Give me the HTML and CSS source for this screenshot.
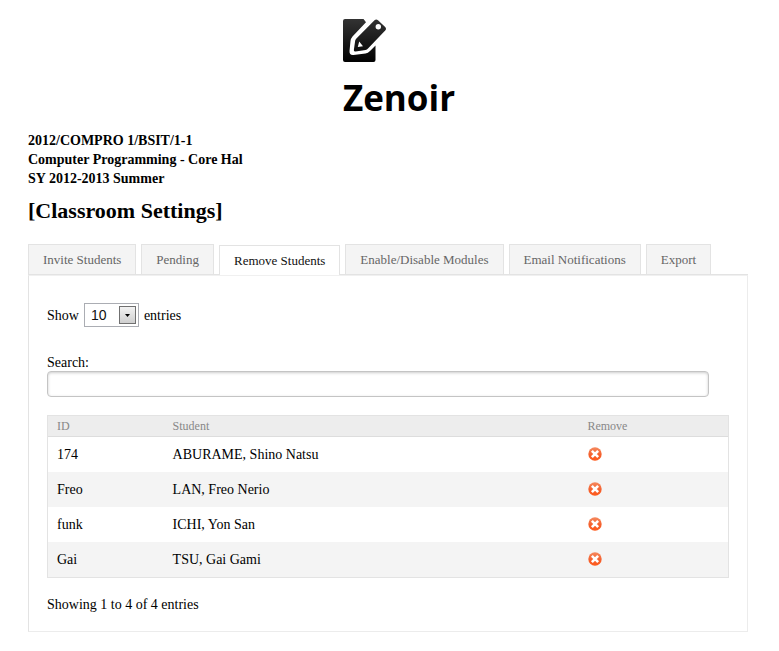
FILE: index.html
```html
<!DOCTYPE html>
<html lang="en">
<head>
<meta charset="utf-8">
<title>Zenoir</title>
<link rel="stylesheet" href="styles.css">
</head>
<body>
<svg class="defs" width="0" height="0" aria-hidden="true">
  <defs>
    <linearGradient id="orange" x1="0" y1="0" x2="0" y2="1">
      <stop offset="0" stop-color="#f58a60"/>
      <stop offset="0.55" stop-color="#f4602e"/>
      <stop offset="1" stop-color="#ff5a1c"/>
    </linearGradient>
    <symbol id="cross" viewBox="0 0 14 14">
      <circle cx="7" cy="7" r="6.7" fill="url(#orange)"/>
      <path d="M4.8 4.8 9.2 9.2M9.2 4.8 4.8 9.2" stroke="#fff" stroke-width="2.6" stroke-linecap="square"/>
    </symbol>
  </defs>
</svg>
<header class="brand">
  <div class="brand-inner">
    <svg class="logo" viewBox="0 0 44 44" aria-hidden="true">
      <defs>
        <linearGradient id="ink" gradientUnits="userSpaceOnUse" x1="0" y1="0" x2="0" y2="44">
          <stop offset="0" stop-color="#333"/>
          <stop offset="1" stop-color="#000"/>
        </linearGradient>
      </defs>
      <path fill="url(#ink)" d="M2 0H20.5L23 3.200 9.500 17.500Q7.800 19.500 7.500 22L6.500 32Q6.300 36.500 10.500 36L22.500 34.500Q25 34 27 32L32.500 26.500V41Q32.500 43 30.500 43H2Q0 43 0 41V2Q0 0 2 0Z"/>
      <path fill="url(#ink)" fill-rule="evenodd" d="M31.500 1.200Q33.200-.3 35 1.200L42.200 8Q43.800 9.800 42.200 11.600L25 29.500Q24 30.600 22.500 30.900L12.500 32.500Q10.700 32.600 10.900 30.800L12.200 21.500Q12.500 20.300 13.400 19.400ZM35.300 5A2.700 2.700 0 1 0 35.300 10.400A2.700 2.700 0 1 0 35.300 5ZM16.200 22.500 14.800 28.100 20 27.200Z"/>
    </svg>
    <h1>Zenoir</h1>
  </div>
</header>
<main class="page">
  <p class="course">2012/COMPRO 1/BSIT/1-1<br>Computer Programming - Core Hal<br>SY 2012-2013 Summer</p>
  <h2>[Classroom Settings]</h2>
  <nav class="tabs">
    <a href="#invite">Invite Students</a>
    <a href="#pending">Pending</a>
    <a class="active" href="#remove" aria-current="page">Remove Students</a>
    <a href="#modules">Enable/Disable Modules</a>
    <a href="#email">Email Notifications</a>
    <a href="#export">Export</a>
  </nav>
  <section class="panel" id="remove">
    <div class="length">
      <label for="length">Show</label>
      <span class="select-box">
        <select id="length"><option>10</option><option>25</option><option>50</option></select>
        <span class="arrow"><svg viewBox="0 0 5 3" aria-hidden="true"><path d="M0 0H5L2.500 3Z"/></svg></span>
      </span>
      <label for="length">entries</label>
    </div>
    <label class="search-label" for="search">Search:</label>
    <input class="search" id="search" type="text">
    <table>
      <thead><tr><th class="col-id">ID</th><th class="col-student">Student</th><th>Remove</th></tr></thead>
      <tbody>
        <tr><td>174</td><td>ABURAME, Shino Natsu</td><td><button type="button" aria-label="Remove"><svg><use href="#cross"/></svg></button></td></tr>
        <tr><td>Freo</td><td>LAN, Freo Nerio</td><td><button type="button" aria-label="Remove"><svg><use href="#cross"/></svg></button></td></tr>
        <tr><td>funk</td><td>ICHI, Yon San</td><td><button type="button" aria-label="Remove"><svg><use href="#cross"/></svg></button></td></tr>
        <tr><td>Gai</td><td>TSU, Gai Gami</td><td><button type="button" aria-label="Remove"><svg><use href="#cross"/></svg></button></td></tr>
      </tbody>
    </table>
    <p class="info">Showing 1 to 4 of 4 entries</p>
  </section>
</main>
</body>
</html>
```
FILE: styles.css
```css
* { box-sizing: border-box; }
body {
  margin: 0;
  padding: 19px 31px 19px 28px;
  background: #fff;
  color: #000;
  font: 14px/19px "Liberation Serif", "Times New Roman", serif;
}
h1, h2, p { margin: 0; }
.defs { position: absolute; }
.brand { display: flex; justify-content: center; padding-left: 22px; }
.logo { display: block; width: 44px; height: 44px; }
h1 {
  margin-top: 10px;
  font: bold 35px/50px "Comic Sans MS", "Open Sans", sans-serif;
}
.course { margin-top: 8px; font-weight: bold; }
h2 { margin-top: 10px; font-size: 22px; line-height: 26px; }
.tabs {
  display: flex;
  align-items: flex-end;
  gap: 5px;
  margin-top: 20px;
  border-bottom: 1px solid #e3e3e3;
}
.tabs a {
  height: 30px;
  padding: 0 14px;
  border: 1px solid #e3e3e3;
  border-bottom: 0;
  background: #f4f4f4;
  color: #666;
  font-size: 13px;
  line-height: 30px;
  text-decoration: none;
  white-space: nowrap;
}
.tabs .active {
  margin-bottom: -1px;
  background: #fff;
  color: #111;
}
.panel {
  padding: 27px 18px 17px;
  border: 1px solid #ececec;
  border-top-color: #f0f0f0;
  border-left-color: #e3e3e3;
}
.length { display: flex; align-items: center; gap: 5px; }
.select-box { position: relative; display: flex; }
select {
  width: 55px;
  height: 24px;
  padding: 0 6px;
  border: 1px solid #abadb3;
  border-radius: 0;
  appearance: none;
  background: #fff;
  color: #111;
  font: 14px "Liberation Sans", Arial, sans-serif;
}
.arrow {
  position: absolute;
  top: 3px;
  right: 3px;
  display: grid;
  place-items: center;
  width: 17px;
  height: 18px;
  border: 1px solid #707070;
  background: linear-gradient(#f2f2f2, #cfcfcf);
  pointer-events: none;
}
.arrow svg { width: 5px; height: 3px; }
.search-label { display: block; margin-top: 28px; line-height: 16px; }
.search {
  display: block;
  width: 97%;
  height: 26px;
  padding: 0 6px;
  border: 1px solid #c4c4c4;
  border-radius: 4px;
  box-shadow: inset 0 1px 3px #ccc;
  font: inherit;
}
table {
  width: 100%;
  margin-top: 18px;
  border: 1px solid #e3e3e3;
  border-spacing: 0;
  table-layout: fixed;
}
th, td { padding: 0 9px; text-align: left; }
th {
  height: 21px;
  border-bottom: 1px solid #ddd;
  background: #ededed;
  color: #888;
  font-size: 12px;
  font-weight: normal;
  line-height: 20px;
}
.col-id { width: 17%; }
.col-student { width: 61%; }
td { height: 35px; }
tbody tr:nth-child(even) { background: #f4f4f4; }
td button { display: block; padding: 0 1px 2px; border: 0; background: none; cursor: pointer; }
td svg { display: block; width: 14px; height: 14px; }
.info { margin-top: 17px; }
```
